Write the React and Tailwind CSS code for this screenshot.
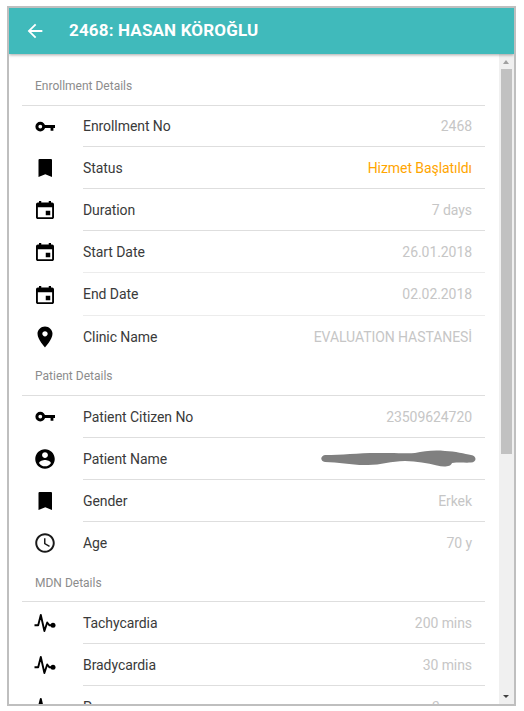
import { IoMdCalendar, IoMdPin, IoMdContact, IoMdTime, IoMdArrowBack } from "react-icons/io";

function KeyIcon({ className }) {
  return (
    <svg viewBox="0 0 24 24" className={className} fill="none" stroke="currentColor">
      <circle cx="7.300" cy="11.600" r="3.400" strokeWidth="3" />
      <path d="M11 11.500H22M19 12V15.800" strokeWidth="2.800" />
    </svg>
  );
}

function BookmarkIcon({ className }) {
  return (
    <svg viewBox="0 0 24 24" className={className} fill="currentColor">
      <path d="M6.500 3H18Q19 3 19 4V21L12.300 18.300L5.500 21V4Q5.500 3 6.500 3Z" />
    </svg>
  );
}

function PulseIcon({ className }) {
  return (
    <svg viewBox="0 0 24 24" className={className} fill="none" stroke="currentColor" strokeWidth="1.900" strokeLinejoin="round">
      <path d="M1.500 14.300H5.200L7.800 4L11.400 20L14.200 11.500L16.500 14.300H20" />
      <circle cx="20" cy="14.300" r="2.500" fill="currentColor" stroke="none" />
    </svg>
  );
}

function Section({ title, className, children }) {
  return (
    <section>
      <h2 className={`flex items-center border-b border-[#dedede] pl-[13px] text-[12px] text-[#8c8c8c] ${className}`}>
        {title}
      </h2>
      {children}
    </section>
  );
}

function Row({ icon: Icon, label, value, className = "h-[42px]", line = "border-b border-[#dedede]", text = "pt-[2px]", valueColor = "text-[#c6c6c6]" }) {
  return (
    <div className={`flex pl-[11px] ${className}`}>
      <div className="flex w-[50px] shrink-0 items-center">
        <Icon className="size-6 text-black" />
      </div>
      <div className={`flex min-w-0 flex-1 items-center justify-between pr-[13px] text-[14px] tracking-[-0.07px] whitespace-nowrap ${text} ${line}`}>
        <span className="text-[#3a3a3a]">{label}</span>
        <span className={valueColor}>{value}</span>
      </div>
    </div>
  );
}

function Scribble() {
  return (
    <svg width="155" height="18" viewBox="0 0 155 18" className="-mt-[2px] -mr-[4px] block">
      <path
        d="M4 5 C22 5 40 2.5 62 3 C75 2.5 85 4 94 3 C103 1 113 0 124 1 C134 1 144 4 150 5 C156 6 156 12 150 12.500 C144 13 139 12 131 13 C130 17 122 17 116 15.500 C106 13 96 11.500 84 11 C70 11 60 15 47 15 C31 15.500 18 12 4 12 C-1 11 -1 6 4 5Z"
        fill="#808080"
      />
    </svg>
  );
}

export default function App() {
  return (
    <div className="h-[711px] w-[524px] overflow-hidden bg-white pt-[6px] pl-[7px] font-['Roboto','Liberation_Sans',sans-serif]">
      <div className="flex h-[700px] w-[509px] flex-col overflow-hidden border-2 border-[#bfbfbf] bg-white">
        <header className="relative z-10 flex h-[46px] shrink-0 items-center bg-[#40babb] pl-[15px] text-white shadow-[0_1px_3px_rgba(0,0,0,0.35)]">
          <IoMdArrowBack className="mt-[-1px] size-[22px]" />
          <h1 className="ml-[23px] text-[17px] font-bold tracking-[0.16px] whitespace-nowrap">2468: HASAN KÖROĞLU</h1>
        </header>
        <div className="flex min-h-0 flex-1">
          <main className="min-w-0 flex-1 overflow-hidden pr-[14px] pl-[13px]">
            <Section title="Enrollment Details" className="h-[52px] pt-3">
              <Row icon={KeyIcon} label="Enrollment No" value="2468" className="h-[41px]" text="" />
              <Row icon={BookmarkIcon} label="Status" value="Hizmet Başlatıldı" valueColor="text-[#ffa500]" />
              <Row icon={IoMdCalendar} label="Duration" value="7 days" />
              <Row icon={IoMdCalendar} label="Start Date" value="26.01.2018" line="border-b border-[#ececec]" />
              <Row icon={IoMdCalendar} label="End Date" value="02.02.2018" line="border-b border-[#ececec]" className="h-[43px]" text="" />
              <Row icon={IoMdPin} label="Clinic Name" value="EVALUATION HASTANESİ" line="" text="" />
            </Section>
            <Section title="Patient Details" className="h-[38px] pb-px">
              <Row icon={KeyIcon} label="Patient Citizen No" value="23509624720" />
              <Row icon={IoMdContact} label="Patient Name" value={<Scribble />} />
              <Row icon={BookmarkIcon} label="Gender" value="Erkek" />
              <Row icon={IoMdTime} label="Age" value="70 y" line="" text="" />
            </Section>
            <Section title="MDN Details" className="h-[38px]">
              <Row icon={PulseIcon} label="Tachycardia" value="200 mins" />
              <Row icon={PulseIcon} label="Bradycardia" value="30 mins" />
              <Row icon={PulseIcon} label="Pause" value="3 secs" />
            </Section>
          </main>
          <div className="flex w-[15px] shrink-0 flex-col items-center bg-[#f0f0f0] pr-[1px]">
            <div className="flex h-[15px] shrink-0 items-center">
              <svg width="6" height="4" viewBox="0 0 6 4"><path d="M0 4L3 0L6 4Z" fill="#a0a0a0" /></svg>
            </div>
            <div className="h-[385px] w-[11px] shrink-0 bg-[#c1c1c1]" />
            <div className="mt-auto flex h-[16px] items-center">
              <svg width="6" height="3" viewBox="0 0 6 3"><path d="M0 0H6L3 3Z" fill="#404040" /></svg>
            </div>
          </div>
        </div>
      </div>
    </div>
  );
}
